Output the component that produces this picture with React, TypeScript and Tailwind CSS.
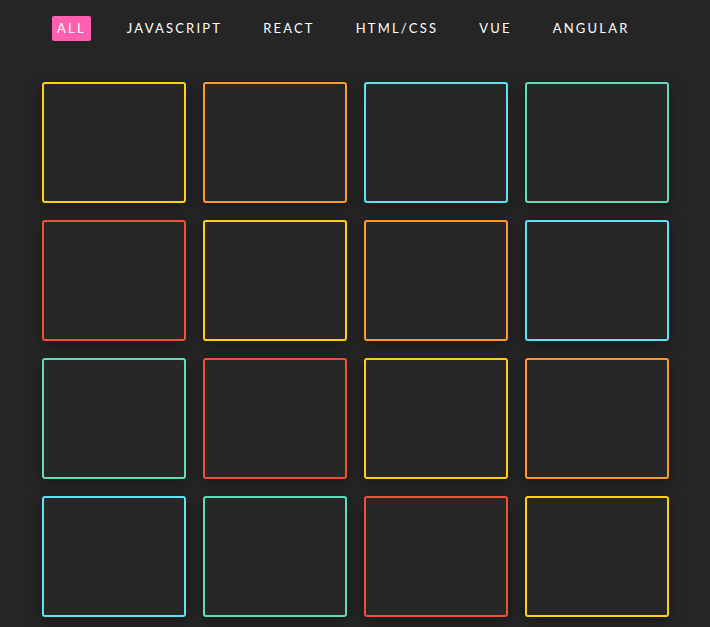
import React from "react";

const borderClasses = [
  "border-[#ffd012]",
  "border-[#ff9a2a]",
  "border-[#5ee3f2]",
  "border-[#62dbbd]",
  "border-[#f0503a]",
];

const items = ["ALL", "JAVASCRIPT", "REACT", "HTML/CSS", "VUE", "ANGULAR"];

export default function App() {
  return (
    <div className="min-h-[627px] w-full bg-[#252525] font-['Lato',sans-serif]">
      <nav className="flex items-center pl-[52px] pt-[16px] gap-[31px]">
        {items.map((it, i) => (
          <span
            key={it}
            className={
              i === 0
                ? "h-[25px] px-[5px] flex items-center rounded-[2px] bg-[#ff5fae] text-white text-[13px] tracking-[2.2px]"
                : "h-[25px] px-[5px] flex items-center text-white text-[13px] tracking-[2.2px]"
            }
          >
            {it}
          </span>
        ))}
      </nav>
      <div className="mt-[41px] mx-auto w-[627px] grid grid-cols-4 gap-[17px]">
        {Array.from({ length: 16 }).map((_, i) => (
          <div
            key={i}
            className={`h-[121px] rounded-[3px] border-2 bg-[#272727] shadow-[0_4px_14px_rgba(0,0,0,0.35)] ${borderClasses[i % 5]}`}
          />
        ))}
      </div>
    </div>
  );
}
